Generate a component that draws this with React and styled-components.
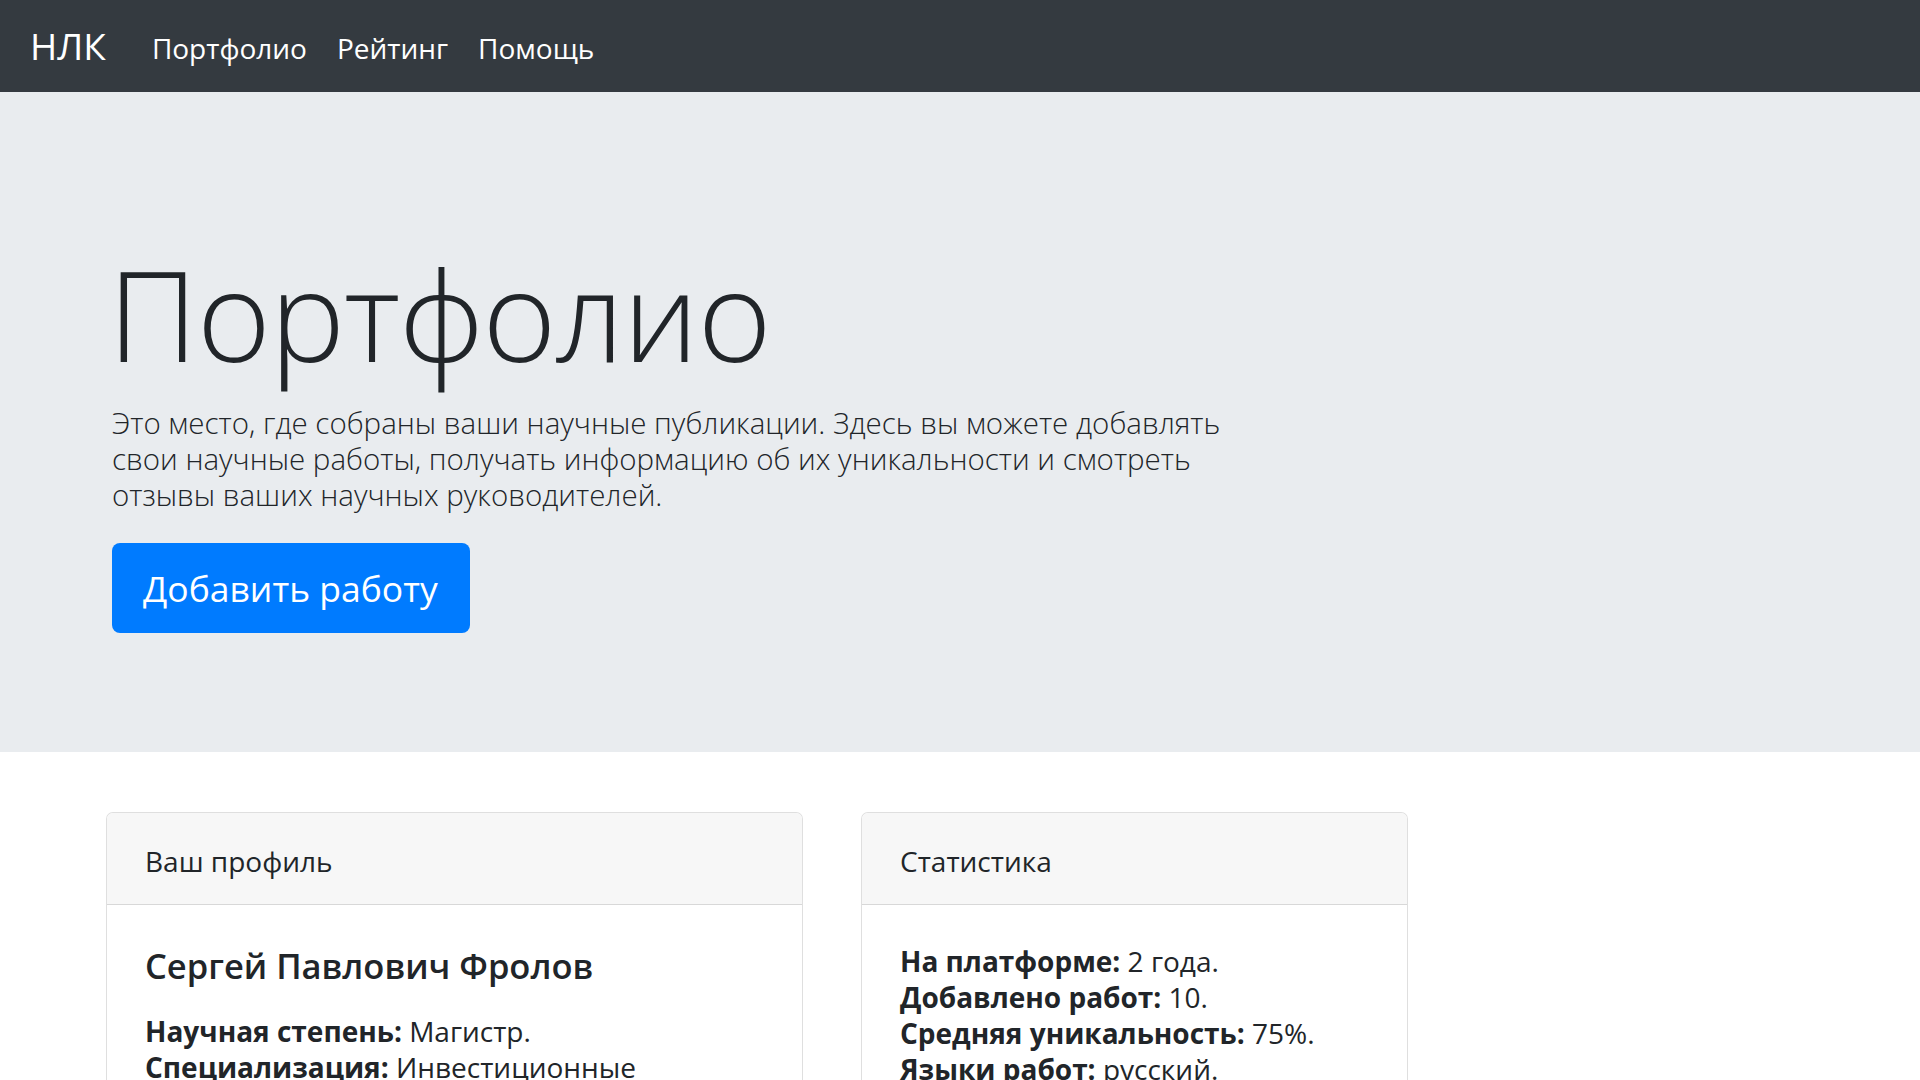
import React from 'react';
import styled, { createGlobalStyle } from 'styled-components';

/* ───────── global ───────── */

const GlobalStyle = createGlobalStyle`
  html, body {
    margin: 0;
    padding: 0;
    background: #ffffff;
    color: #212529;
    font-family: "Open Sans", "Noto Sans", "Liberation Sans", sans-serif;
  }
  * {
    box-sizing: border-box;
  }
`;

/* ───────── navbar ───────── */

const Navbar = styled.nav`
  height: 92px;
  background: #343a40;
  display: flex;
  align-items: center;
  padding: 3px 0 0 30px;
`;

const Brand = styled.a`
  font-size: 37px;
  line-height: 1;
  color: #ffffff;
  text-decoration: none;
  margin-right: 46px;
  padding-bottom: 4px;
`;

const NavList = styled.ul`
  display: flex;
  gap: 30px;
  list-style: none;
  margin: 0;
  padding: 0;
`;

const NavLink = styled.a`
  font-size: 28px;
  color: #ffffff;
  text-decoration: none;
`;

/* ───────── jumbotron ───────── */

const Jumbotron = styled.section`
  height: 660px;
  background: #e9ecef;
  padding: 146px 0 0 112px;
`;

const Display = styled.h1`
  font-size: 126px;
  font-weight: 300;
  line-height: 1.2;
  margin: 0 0 0 -4px;
  letter-spacing: -1px;
`;

const Lead = styled.p`
  font-size: 29.5px;
  font-weight: 300;
  line-height: 36px;
  max-width: 1150px;
  margin: 16px 0 30px 0;
`;

const PrimaryButton = styled.button`
  height: 90px;
  padding: 0 32px 0 31px;
  border: none;
  border-radius: 8px;
  background: #007bff;
  color: #ffffff;
  font-family: inherit;
  font-size: 35.5px;
  cursor: pointer;
`;

/* ───────── cards ───────── */

const CardRow = styled.div`
  display: grid;
  grid-template-columns: 697px 547px;
  gap: 58px;
  padding: 60px 0 0 106px;
`;

const Card = styled.div`
  border: 1px solid rgba(0, 0, 0, 0.125);
  border-radius: 7px;
  background: #ffffff;
  overflow: hidden;
`;

const CardHeader = styled.div`
  height: 92px;
  display: flex;
  align-items: center;
  padding: 5px 38px 0 38px;
  background: #f7f7f7;
  border-bottom: 1px solid rgba(0, 0, 0, 0.125);
  font-size: 28px;
`;

const CardBody = styled.div`
  padding: 38px;
`;

const Name = styled.h5`
  font-size: 34.5px;
  font-weight: 600;
  line-height: 46px;
  margin: 0 0 24px 0;
`;

const InfoLine = styled.div`
  font-size: 28px;
  line-height: 36px;

  b {
    font-weight: 700;
  }
`;

/* ───────── component ───────── */

const App = () => {
  return (
    <>
      <GlobalStyle />
      <Navbar>
        <Brand href="#">НЛК</Brand>
        <NavList>
          <li><NavLink href="#">Портфолио</NavLink></li>
          <li><NavLink href="#">Рейтинг</NavLink></li>
          <li><NavLink href="#">Помощь</NavLink></li>
        </NavList>
      </Navbar>

      <Jumbotron>
        <Display>Портфолио</Display>
        <Lead>
          Это место, где собраны ваши научные публикации. Здесь вы можете добавлять
          свои научные работы, получать информацию об их уникальности и смотреть
          отзывы ваших научных руководителей.
        </Lead>
        <PrimaryButton>Добавить работу</PrimaryButton>
      </Jumbotron>

      <CardRow>
        <Card>
          <CardHeader>Ваш профиль</CardHeader>
          <CardBody>
            <Name>Сергей Павлович Фролов</Name>
            <InfoLine><b>Научная степень:</b> Магистр.</InfoLine>
            <InfoLine><b>Специализация:</b> Инвестиционные технологии и финансовый анализ.</InfoLine>
            <InfoLine><b>Научный руководитель:</b> Иванов И. И.</InfoLine>
          </CardBody>
        </Card>
        <Card>
          <CardHeader>Статистика</CardHeader>
          <CardBody>
            <InfoLine><b>На платформе:</b> 2 года.</InfoLine>
            <InfoLine><b>Добавлено работ:</b> 10.</InfoLine>
            <InfoLine><b>Средняя уникальность:</b> 75%.</InfoLine>
            <InfoLine><b>Языки работ:</b> русский.</InfoLine>
          </CardBody>
        </Card>
      </CardRow>
    </>
  );
};

export default App;
